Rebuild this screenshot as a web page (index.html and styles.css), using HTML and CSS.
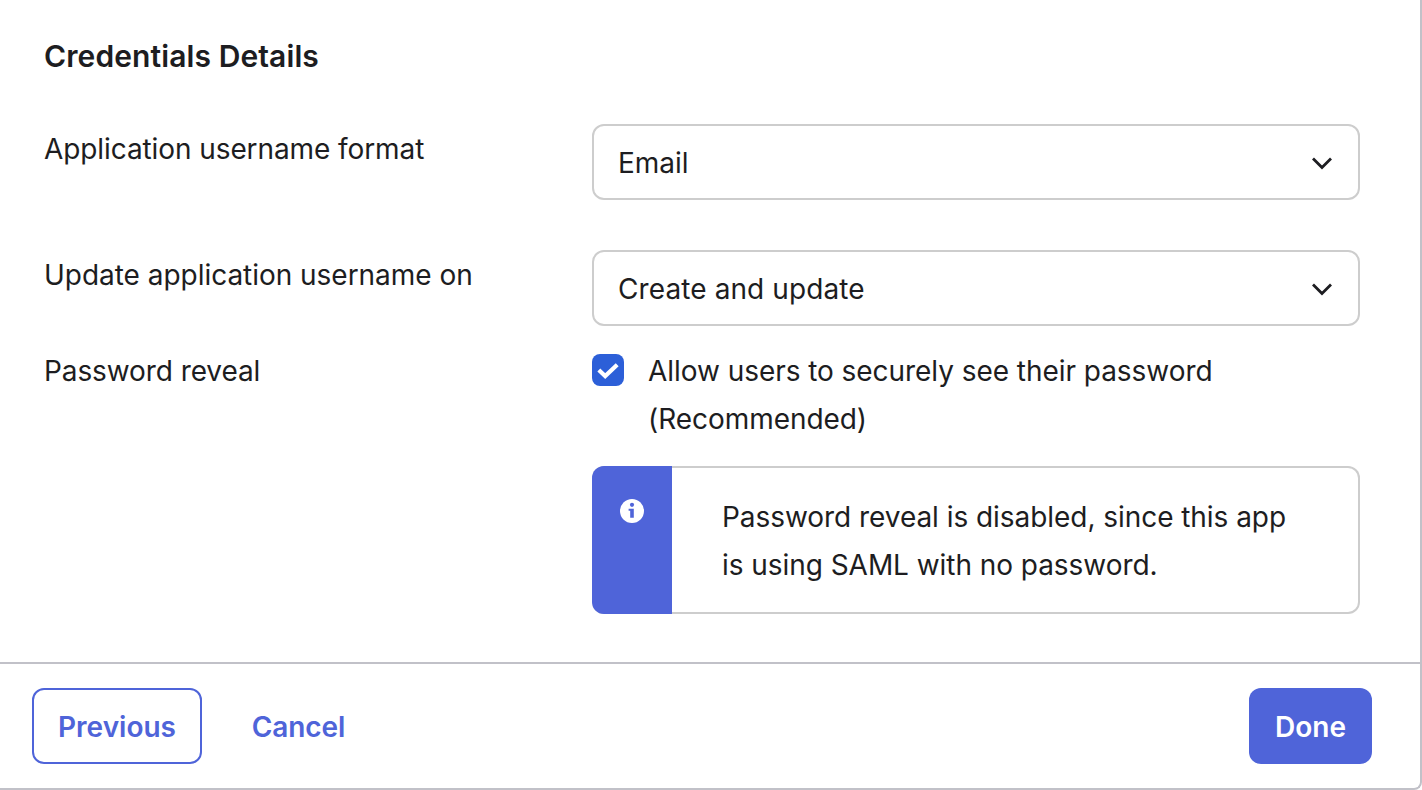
FILE: index.html
```html
<!DOCTYPE html>
<html lang="en">
<head>
<meta charset="utf-8">
<title>Credentials Details</title>
<link rel="stylesheet" href="styles.css">
</head>
<body>
<div class="card">
  <main class="content">
    <h2 class="title">Credentials Details</h2>
    <div class="row row-format">
      <div class="label">Application username format</div>
      <div class="control">
        <div class="select"><span>Email</span>
          <svg class="chev" width="22" height="14" viewBox="0 0 22 14"><path d="M2 2.500 11 11.500 20 2.500" fill="none" stroke="#1d1d21" stroke-width="2.800"/></svg>
        </div>
      </div>
    </div>
    <div class="row row-update">
      <div class="label label-wide">Update application username on</div>
      <div class="control">
        <div class="select"><span class="select-wide">Create and update</span>
          <svg class="chev" width="22" height="14" viewBox="0 0 22 14"><path d="M2 2.500 11 11.500 20 2.500" fill="none" stroke="#1d1d21" stroke-width="2.800"/></svg>
        </div>
      </div>
    </div>
    <div class="row">
      <div class="label">Password reveal</div>
      <div class="control">
        <div class="check-row">
          <span class="checkbox">
            <svg width="32" height="32" viewBox="0 0 32 32"><path d="M6.800 16 13.200 22 25.200 10.800" fill="none" stroke="#fff" stroke-width="4.200"/></svg>
          </span>
          <span class="check-label">Allow users to securely see their password (Recommended)</span>
        </div>
        <div class="notice">
          <div class="notice-side">
            <svg width="24" height="24" viewBox="0 0 24 24"><circle cx="12" cy="12" r="12" fill="#fff"/><circle cx="12" cy="5.800" r="2.100" fill="#4f64d9"/><path d="M8.600 9.800h5.200v9h-3.600v-7h-1.600z" fill="#4f64d9"/></svg>
          </div>
          <div class="notice-text">Password reveal is disabled, since this app is using SAML with no password.</div>
        </div>
      </div>
    </div>
  </main>
  <footer class="footer">
    <div class="footer-left">
      <button class="btn btn-outline">Previous</button>
      <button class="btn btn-link">Cancel</button>
    </div>
    <button class="btn btn-primary">Done</button>
  </footer>
</div>
</body>
</html>
```
FILE: styles.css
```css
* { box-sizing: border-box; }
html, body { margin: 0; padding: 0; background: #fff; }
body {
  width: 1422px;
  height: 790px;
  overflow: hidden;
  font-family: Inter, "Liberation Sans", sans-serif;
  color: #1d1d21;
}
.card {
  height: 790px;
  border-right: 2px solid #c1c1c8;
  border-bottom: 2px solid #c1c1c8;
  border-bottom-right-radius: 8px;
  display: flex;
  flex-direction: column;
}
.content {
  flex: 1;
  padding: 36px 60px 0 44px;
}
.title {
  margin: 0;
  font-size: 30px;
  line-height: 40px;
  font-weight: 600;
  letter-spacing: 0.1px;
  color: #1d1d21;
}
.row { display: flex; }
.row-format { margin-top: 48px; height: 126px; }
.row-update { height: 96px; }
.label {
  width: 548px;
  flex: none;
  padding-top: 1px;
  font-size: 28px;
  line-height: 48px;
  letter-spacing: -0.09px;
}
.label-wide { letter-spacing: -0.03px; }
.control { width: 768px; flex: none; }
.select {
  height: 76px;
  border: 2px solid #cdcdcd;
  border-radius: 12px;
  padding: 2px 25px 0 24px;
  display: flex;
  align-items: center;
  justify-content: space-between;
  font-size: 28px;
}
.select-wide { letter-spacing: 0.1px; }
.check-row { display: flex; }
.checkbox {
  width: 32px;
  height: 32px;
  margin-top: 8px;
  flex: none;
  border-radius: 8px;
  background: #2c5fd8;
  display: block;
}
.checkbox svg { display: block; }
.check-label {
  margin-left: 24px;
  padding-top: 1px;
  font-size: 28px;
  line-height: 48px;
  letter-spacing: -0.05px;
}
.notice {
  margin-top: 23px;
  height: 148px;
  border: 2px solid #cdcdcd;
  border-left: 0;
  border-radius: 12px;
  display: flex;
}
.notice-side {
  width: 80px;
  flex: none;
  margin: -2px 0;
  background: #4f64d9;
  border-radius: 12px 0 0 12px;
  padding: 33px 0 0 28px;
}
.notice-side svg { display: block; }
.notice-text {
  padding: 25px 56px 0 50px;
  font-size: 28px;
  line-height: 48px;
  letter-spacing: -0.05px;
}
.footer {
  height: 126px;
  flex: none;
  border-top: 2px solid #c1c1c8;
  padding: 24px 48px 0 32px;
  display: flex;
  justify-content: space-between;
  align-items: flex-start;
}
.footer-left { display: flex; gap: 2px; }
.btn {
  height: 76px;
  font-family: inherit;
  font-size: 28px;
  font-weight: 600;
  border-radius: 12px;
  background: none;
  border: 0;
  padding: 2px 0 0;
  color: #4f64d9;
}
.btn-outline { width: 170px; border: 2px solid #4f64d9; }
.btn-link { width: 189px; letter-spacing: -0.1px; }
.btn-primary { width: 123px; background: #4f64d9; color: #fff; }
```
